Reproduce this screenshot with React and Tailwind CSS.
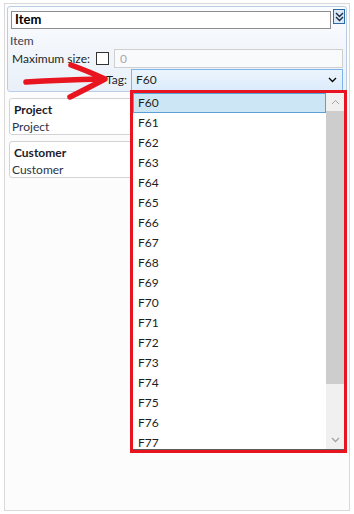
import React from "react";

const font = { fontFamily: '"Segoe UI", Lato, "Noto Sans", sans-serif' };

const tags = Array.from({ length: 18 }, (_, i) => `F${60 + i}`);

const ChevronDown = ({ className }) => (
  <svg width="9" height="6" viewBox="0 0 9 6" className={className}>
    <path d="M1 1 L4.5 4.5 L8 1" fill="none" stroke="currentColor" strokeWidth="1.3" />
  </svg>
);

const ChevronUp = ({ className }) => (
  <svg width="9" height="6" viewBox="0 0 9 6" className={className}>
    <path d="M1 5 L4.5 1.5 L8 5" fill="none" stroke="currentColor" strokeWidth="1" />
  </svg>
);

const Group = ({ title, children }) => (
  <div className="mx-[4px] mt-[6px] h-[37px] rounded-[3px] border border-[#d3d3d3] bg-white pl-[2px] pt-[3px]">
    <div className="pl-[2px] text-[12px] font-bold leading-[16px] text-[#1b1b2b]">{title}</div>
    <div className="text-[12px] leading-[17px] text-[#2d3445]">{children}</div>
  </div>
);

export default function App() {
  return (
    <div className="relative h-[514px] w-[354px] overflow-hidden bg-white pt-[3px] pl-[4px]" style={font}>
      {/* outer panel */}
      <div className="h-[508px] w-[346px] border border-[#d9d9d9] bg-[#fcfcfc] px-[2px] pt-[2px]">
        {/* Item group */}
        <div className="h-[86px] rounded-[3px] border border-[#b9cde5] bg-gradient-to-b from-[#fbfcfe] to-[#e9f0f9] pl-[3px] pr-[1px]">
          <div className="flex items-start gap-[2px] pt-[2px]">
            <div className="mt-[2px] h-[18px] w-[321px] border border-[#8e8e8e] bg-white pl-[3px] text-[13px] font-bold leading-[15px] text-black">
              Item
            </div>
            <div className="flex h-[15px] w-[12px] flex-col items-center justify-center border border-[#2e6aa8] bg-[#dbe8f6] text-[#1a2a40]">
              <svg width="9" height="10" viewBox="0 0 9 10">
                <path d="M1 1 L4.5 4.5 L8 1 M1 5 L4.5 8.5 L8 5" fill="none" stroke="currentColor" strokeWidth="1.4" />
              </svg>
            </div>
          </div>
          <div className="-ml-[1px] mt-[4px] text-[12px] leading-[16px] text-[#3c4150]">Item</div>
          <div className="flex items-center pl-[1px]">
            <span className="w-[84px] shrink-0 whitespace-nowrap text-[12px] leading-[16px] text-[#1e1e1e]">Maximum size:</span>
            <span className="h-[13px] w-[13px] shrink-0 border border-[#333] bg-white"></span>
            <div className="ml-[5px] h-[19px] w-[229px] border border-[#cfcfcf] bg-[#f8fafc] pl-[5px] text-[12px] leading-[17px] text-[#a8a8a8]">
              0
            </div>
          </div>
          <div className="mt-[1px] flex items-start">
            <span className="w-[120px] shrink-0 pr-[4px] pt-[3px] text-right text-[12px] leading-[16px] text-[#1e1e1e]">Tag:</span>
            <div className="flex h-[22px] w-[212px] items-center justify-between border border-[#7eb4ea] bg-gradient-to-b from-[#ecf4fc] to-[#dcecfc] pl-[4px] pr-[5px] text-[12px] text-[#1e1e1e]">
              <span>F60</span>
              <ChevronDown className="text-black" />
            </div>
          </div>
        </div>

        <div className="-mx-[2px]">
          <Group title="Project">Project</Group>
          <Group title="Customer">Customer</Group>
        </div>
      </div>

      {/* red arrow annotation */}
      <svg className="absolute left-0 top-0" width="140" height="110" viewBox="0 0 140 110">
        <path
          d="M26 82 Q60 80 103 79 M71 65 Q90 72 105 79 Q88 88 70 97"
          fill="none"
          stroke="#e8141f"
          strokeWidth="5.5"
          strokeLinecap="round"
          strokeLinejoin="round"
        />
      </svg>

      {/* open dropdown list */}
      <div className="absolute left-[130px] top-[90px] flex h-[363px] w-[217px] border-[3px] border-[#e8141f] bg-white">
        <div className="flex flex-1 border-b border-[#5c5c5c]">
          <div className="flex-1 overflow-hidden">
            {tags.map((t, i) => (
              <div
                key={t}
                className={
                  i === 0
                    ? "h-[20px] border border-[#5a9fd6] bg-[#cce6f5] pl-[4px] text-[12px] leading-[18px] text-[#1e1e1e]"
                    : "h-[20px] pl-[5px] text-[12px] leading-[20px] text-[#1e1e1e]"
                }
              >
                {t}
              </div>
            ))}
          </div>
          <div className="flex w-[18px] flex-col bg-[#f0f0f0]">
            <div className="flex h-[18px] items-center justify-center text-[#a3a3a3]">
              <ChevronUp />
            </div>
            <div className="h-[273px] bg-[#cdcdcd]"></div>
            <div className="flex-1"></div>
            <div className="flex h-[18px] items-center justify-center text-[#a3a3a3]">
              <ChevronDown />
            </div>
          </div>
        </div>
      </div>
    </div>
  );
}
